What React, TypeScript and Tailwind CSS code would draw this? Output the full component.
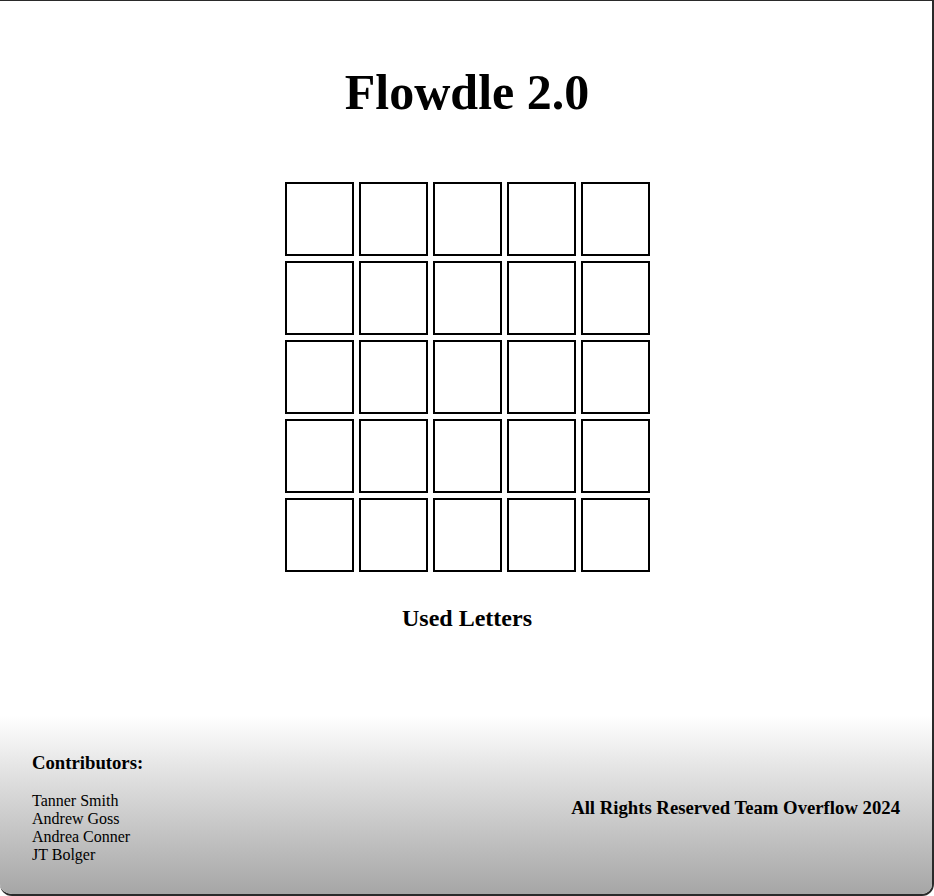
import React from "react";

export default function App() {
  const rows = Array.from({ length: 5 });
  const cols = Array.from({ length: 5 });
  return (
    <div
      className="w-[934px] h-[896px] flex flex-col bg-white text-black border-t border-r-2 border-b-2 border-[#2a2a2a] rounded-b-[12px] overflow-hidden"
      style={{ fontFamily: '"Liberation Serif", "Times New Roman", serif' }}
    >
      <div className="flex flex-col items-center pl-[2px]">
        <h1 className="mt-[63px] text-[50px] leading-[57px] font-bold">Flowdle 2.0</h1>
        <div className="mt-[61px] flex flex-col gap-[5px]">
          {rows.map((_, r) => (
            <div key={r} className="flex gap-[5px]">
              {cols.map((_, c) => (
                <div key={c} className="w-[69px] h-[74px] border-2 border-black bg-white" />
              ))}
            </div>
          ))}
        </div>
        <h2 className="mt-[32px] text-[24px] leading-[28px] font-bold">Used Letters</h2>
      </div>
      <footer className="mt-auto flex items-center justify-between pl-8 pr-8 pt-[36px] pb-[30px] bg-gradient-to-b from-white to-[#a6a6a6]">
        <div className="flex flex-col">
          <h3 className="text-[18.72px] leading-[21.5px] font-bold mb-[19px]">Contributors:</h3>
          <div className="text-[16px] leading-[18px]">
            <div>Tanner Smith</div>
            <div>Andrew Goss</div>
            <div>Andrea Conner</div>
            <div>JT Bolger</div>
          </div>
        </div>
        <h3 className="text-[18.72px] leading-[21.5px] font-bold">All Rights Reserved Team Overflow 2024</h3>
      </footer>
    </div>
  );
}
